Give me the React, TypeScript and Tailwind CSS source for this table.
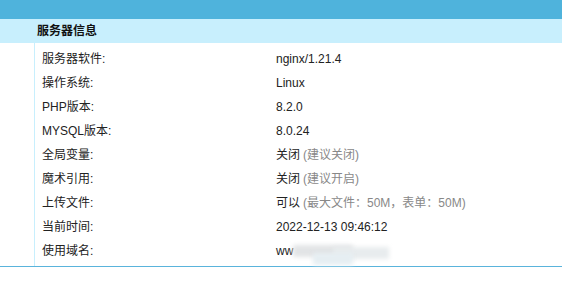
const rows: { label: string; value: string; note?: string }[] = [
  { label: '服务器软件:', value: 'nginx/1.21.4' },
  { label: '操作系统:', value: 'Linux' },
  { label: 'PHP版本:', value: '8.2.0' },
  { label: 'MYSQL版本:', value: '8.0.24' },
  { label: '全局变量:', value: '关闭', note: '(建议关闭)' },
  { label: '魔术引用:', value: '关闭', note: '(建议开启)' },
  { label: '上传文件:', value: '可以', note: '(最大文件：50M，表单：50M)' },
  { label: '当前时间:', value: '2022-12-13 09:46:12' },
];

export default function App() {
  return (
    <div
      className="w-[562px] h-[281px] bg-white text-[12px] text-[#222] overflow-hidden"
      style={{ fontFamily: '"Liberation Sans", "Noto Sans CJK SC", sans-serif' }}
    >
      <div className="h-[19px] bg-[#4fb3dc]" />
      <div className="h-[24px] bg-[#c8effd] pl-[37px] flex items-center font-bold text-[12px] text-[#111]">
        服务器信息
      </div>

      <div className="border-b border-[#5ab4dc]">
        <div className="ml-[34px] border-l border-[#c8effd] pl-[7px] pt-[4px] pb-[3px]">
          {rows.map((r) => (
            <div key={r.label} className="h-[24px] flex items-center">
              <div className="w-[234px]">{r.label}</div>
              <div>
                {r.value}
                {r.note && <span className="ml-[3px] text-[#888]">{r.note}</span>}
              </div>
            </div>
          ))}
          <div className="h-[24px] flex items-center">
            <div className="w-[234px]">使用域名:</div>
            <div className="flex items-center">
              <span>ww</span>
              <span className="relative inline-block w-[96px] h-[16px]">
                <span className="absolute left-0 top-[2px] w-[60px] h-[12px] bg-[#e2e4e6] blur-[2px]" />
                <span className="absolute left-[40px] top-[4px] w-[56px] h-[12px] bg-[#e8ecee] blur-[2px]" />
                <span className="absolute left-[20px] top-[10px] w-[40px] h-[12px] bg-[#e6eef2] blur-[2px]" />
              </span>
            </div>
          </div>
        </div>
      </div>
    </div>
  );
}
